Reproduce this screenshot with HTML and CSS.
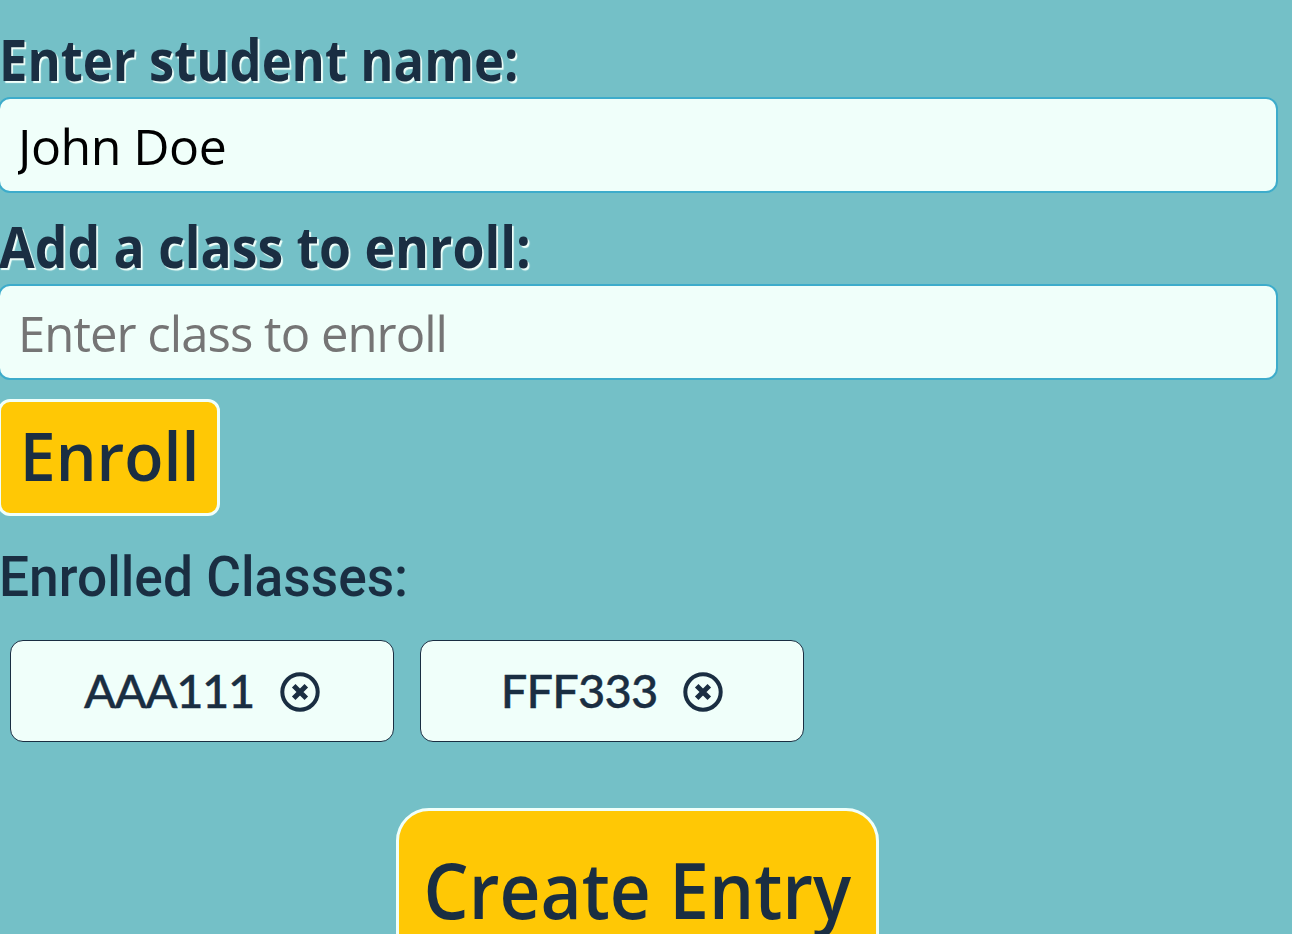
FILE: index.html
```html
<!DOCTYPE html>
<html lang="en">
<head>
<meta charset="utf-8">
<title>Student Enrollment</title>
<link rel="stylesheet" href="styles.css">
</head>
<body>
<main class="form">
  <label class="label" for="student"><span class="fit fit-student">Enter student name:</span></label>
  <input class="field field-name" id="student" type="text" value="John Doe">
  <label class="label" for="course"><span class="fit fit-course">Add a class to enroll:</span></label>
  <input class="field field-course" id="course" type="text" placeholder="Enter class to enroll">
  <button class="button enroll" type="button"><span class="fit fit-enroll">Enroll</span></button>
  <h2 class="heading"><span class="fit fit-heading">Enrolled Classes:</span></h2>
  <div class="classes">
    <div class="card"><span class="code code-a">AAA111</span>
      <svg class="remove" viewBox="0 0 40 40"><circle cx="20" cy="20" r="17.7"/><path d="M13.7 13.7L26.3 26.3M26.3 13.7L13.7 26.3"/></svg>
    </div>
    <div class="card"><span class="code code-f">FFF333</span>
      <svg class="remove" viewBox="0 0 40 40"><circle cx="20" cy="20" r="17.7"/><path d="M13.7 13.7L26.3 26.3M26.3 13.7L13.7 26.3"/></svg>
    </div>
  </div>
  <button class="button create" type="button"><span class="fit fit-create">Create Entry</span></button>
</main>
</body>
</html>
```
FILE: styles.css
```css
* { box-sizing: border-box; }
html, body { margin: 0; height: 100%; overflow: hidden; }
body { background: #74c0c7; color: #1a2e42; font-family: "Open Sans", "Noto Sans", sans-serif; }
.form { display: flex; flex-direction: column; align-items: flex-start; width: 1280px; margin-left: -2px; padding-top: 24px; }
.label { height: 73px; padding-left: 1px; font-size: 57px; line-height: 70px; font-weight: 700; text-shadow: 2px 2px 1px #f0fffa; white-space: nowrap; }
.field { width: 1280px; height: 96px; margin: 0 0 18px; padding: 1px 18px 0; border: 2px solid #3daccb; border-radius: 12px; background: #f0fffa; color: #000; font: 400 50px "Open Sans", sans-serif; letter-spacing: -0.5px; outline: 0; }
.field-course { margin-bottom: 19px; font-size: 49px; letter-spacing: -.95px; }
.field::placeholder { color: #757575; opacity: 1; }
.button { display: flex; flex: none; align-items: center; justify-content: center; padding: 0 0 9px; border: 3px solid #f0fffa; background: #ffc805; color: #1a2e42; font-family: "Open Sans", sans-serif; font-weight: 600; white-space: nowrap; }
.enroll { width: 222px; height: 117px; padding: 0 0 6px 1px; border-radius: 12px; font-size: 67px; line-height: 100px; }
.fit { display: inline-block; transform-origin: left; }
.fit-student { transform: scaleX(.89); }
.fit-course { transform: scaleX(.907); }
.fit-enroll { transform: scaleX(.96); transform-origin: center; }
.fit-heading { transform: scaleX(.969); }
.fit-create { transform: scaleX(.924); transform-origin: center; }
.heading { height: 80px; margin: 21px 0 0; padding-left: 1px; font: 500 55px/80px Roboto, sans-serif; }
.classes { display: flex; gap: 26px; margin: 23px 0 0 12px; }
.card { display: flex; align-items: center; justify-content: center; gap: 26px; width: 384px; height: 102px; border: 1px solid #1a2e42; border-radius: 13px; background: #f0fffa; }
.code { margin-bottom: 3px; font: 500 47px/60px Lato, sans-serif; -webkit-text-stroke: .4px #1a2e42; }
.code-a { letter-spacing: -1.3px; }
.code-f { letter-spacing: -.8px; }
.remove { width: 40px; height: 40px; margin-top: 2px; fill: none; stroke: #1a2e42; stroke-width: 4; }
.remove path { stroke-width: 5; }
.create { width: 483px; height: 172px; margin: 66px 0 0 398px; border-radius: 33px; font-size: 77px; }
```
